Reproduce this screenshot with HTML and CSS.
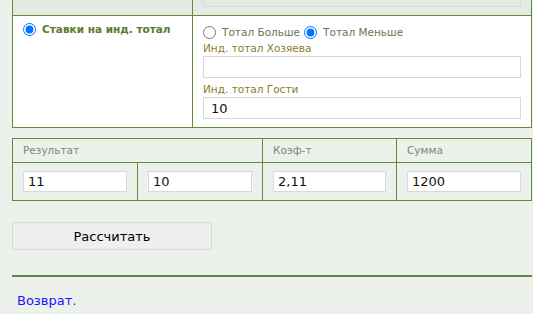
FILE: index.html
```html
<!DOCTYPE html>
<html lang="ru">
<head>
<meta charset="utf-8">
<title>Калькулятор</title>
<link rel="stylesheet" href="styles.css">
</head>
<body>
<div class="page">
  <table class="bets">
    <colgroup><col class="c-left"><col></colgroup>
    <tr class="prev-row">
      <td></td>
      <td><div class="prev-field"></div></td>
    </tr>
    <tr>
      <td class="left-cell">
        <label class="main-option"><input type="radio" name="type" checked> Ставки на инд. тотал</label>
      </td>
      <td class="right-cell">
        <div class="radio-line">
          <label class="opt"><input type="radio" name="dir"> Тотал Больше</label>
          <label class="opt"><input type="radio" name="dir" checked> Тотал Меньше</label>
        </div>
        <div class="field-label">Инд. тотал Хозяева</div>
        <input class="field" type="text" value="">
        <div class="field-label second">Инд. тотал Гости</div>
        <input class="field" type="text" value="10">
      </td>
    </tr>
  </table>

  <table class="result">
    <colgroup><col class="r1"><col class="r2"><col class="r3"><col class="r4"></colgroup>
    <tr class="head">
      <td colspan="2">Результат</td>
      <td>Коэф-т</td>
      <td>Сумма</td>
    </tr>
    <tr class="vals">
      <td><input class="val" type="text" value="11"></td>
      <td><input class="val" type="text" value="10"></td>
      <td><input class="val" type="text" value="2,11"></td>
      <td><input class="val" type="text" value="1200"></td>
    </tr>
  </table>

  <button class="calc" type="button">Рассчитать</button>

  <div class="rule"></div>

  <a class="back" href="#">Возврат.</a>
</div>
</body>
</html>
```

FILE: styles.css
```css
html, body {
  margin: 0;
  padding: 0;
  background: #ecf1eb;
}

body {
  font-family: "DejaVu Sans", Verdana, sans-serif;
  font-size: 10.5px;
  color: #333;
}

.page {
  width: 520px;
  margin-left: 12px;
}

table {
  border-collapse: collapse;
  width: 520px;
  table-layout: fixed;
}

td {
  border: 1px solid #5f8b3b;
  padding: 0;
  vertical-align: top;
}

.bets {
  margin-top: -1px;
  background: #fff;
}

.c-left { width: 180px; }

.prev-row td {
  background: #e4e9e3;
  height: 15px;
  border-top-color: transparent;
}

.prev-field {
  margin: 0 10px 0 10px;
  height: 7px;
  border: 1px solid #d6dbd4;
  border-top: none;
  box-sizing: border-box;
}

.left-cell {
  padding: 6px 10px 0 10px;
}

.main-option {
  display: flex;
  align-items: center;
  font-weight: bold;
  color: #5c7a2c;
  line-height: 15px;
}

input[type="radio"] {
  width: 13px;
  height: 13px;
  margin: 0 5px 0 0;
  flex: none;
}

.main-option input { margin-right: 6px; }

.right-cell {
  padding: 6px 10px 8px 10px;
}

.radio-line {
  display: flex;
  align-items: center;
  height: 19px;
  color: #6b7650;
}

.opt {
  display: inline-flex;
  align-items: center;
  margin-right: 4px;
}

.opt input { margin-top: 2px; margin-right: 6px; }

.field-label {
  line-height: 14px;
  height: 14px;
  margin-bottom: 1px;
  color: #8b7c2e;
}

.field-label.second {
  margin-top: 4px;
}

.field, .val {
  display: block;
  width: 100%;
  box-sizing: border-box;
  height: 22px;
  margin: 0;
  padding: 0 7px;
  border: 1px solid #d8d8d8;
  background: #fff;
  font-family: "DejaVu Sans", Verdana, sans-serif;
  font-size: 13px;
  color: #111;
  outline: none;
}

.result {
  margin-top: 10px;
}

.r1 { width: 125px; }
.r2 { width: 125px; }
.r3 { width: 134px; }

.head td {
  padding: 5px 10px;
  line-height: 13px;
  color: #7b8a6c;
}

.vals td {
  padding: 8px 10px 8px 10px;
}

.val {
  height: 21px;
  padding: 0 4px;
}

.calc {
  display: block;
  margin-top: 21px;
  width: 200px;
  height: 28px;
  background: #efefef;
  border: 1px solid #d9d9d9;
  font-family: "DejaVu Sans", Verdana, sans-serif;
  font-size: 13px;
  color: #000;
  padding: 0;
}

.rule {
  margin-top: 25px;
  height: 2px;
  background: #5f8b3b;
}

.back {
  display: inline-block;
  margin: 16px 0 0 5px;
  font-size: 13px;
  line-height: 16px;
  color: #1f12ff;
  text-decoration: none;
}
```
